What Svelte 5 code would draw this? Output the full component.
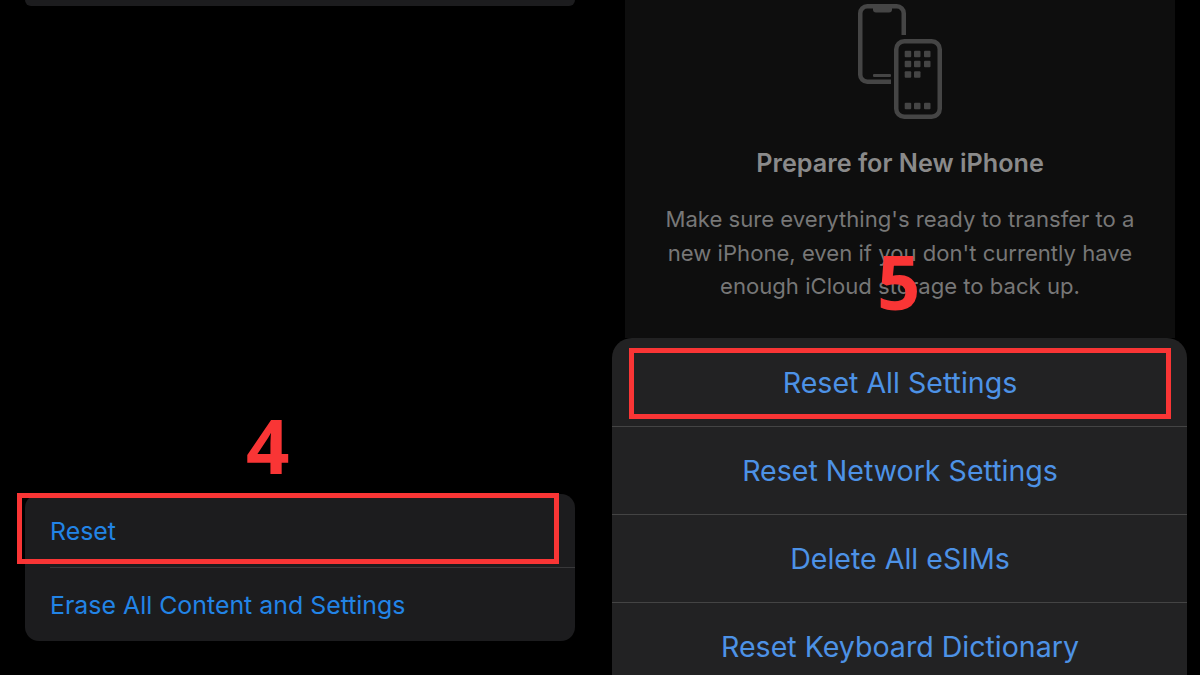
<script>
  const actions = ['Reset All Settings', 'Reset Network Settings', 'Delete All eSIMs', 'Reset Keyboard Dictionary'];
</script>

<div class="page">
  <section class="left">
    <div class="top-card"></div>
    <div class="menu-wrap">
      <span class="step step4">4</span>
      <div class="menu">
        <div class="menu-row first">Reset</div>
        <div class="divider"></div>
        <div class="menu-row">Erase All Content and Settings</div>
      </div>
      <div class="mark mark-left"></div>
    </div>
  </section>

  <section class="right">
    <div class="prepare">
      <svg class="phones" width="84" height="118" viewBox="0 0 84 118" fill="none" aria-hidden="true">
        <path d="M33 79.750H9.250A7 7 0 0 1 2.250 72.750V11.250A7 7 0 0 1 9.250 4.250H38.750A7 7 0 0 1 45.750 11.250V33" stroke="#454545" stroke-width="4.500"/>
        <path d="M15 4h19v3.500a3 3 0 0 1-3 3H18a3 3 0 0 1-3-3z" fill="#454545"/>
        <rect x="15" y="72" width="18" height="3" rx="1" fill="#454545"/>
        <rect x="38.250" y="39.250" width="43.500" height="75.500" rx="8" stroke="#454545" stroke-width="4.500"/>
        <g fill="#454545">
          <rect x="46.700" y="48.700" width="6.500" height="6.500" rx="1"/><rect x="56" y="48.700" width="6.500" height="6.500" rx="1"/><rect x="66" y="48.700" width="6.500" height="6.500" rx="1"/>
          <rect x="46.700" y="58.700" width="6.500" height="6.500" rx="1"/><rect x="56" y="58.700" width="6.500" height="6.500" rx="1"/><rect x="66" y="58.700" width="6.500" height="6.500" rx="1"/>
          <rect x="46.700" y="69.300" width="6.500" height="6.500" rx="1"/><rect x="56" y="69.300" width="6.500" height="6.500" rx="1"/>
          <rect x="46.700" y="100.700" width="6.500" height="6.500" rx="1"/><rect x="56" y="100.700" width="6.500" height="6.500" rx="1"/><rect x="66" y="100.700" width="6.500" height="6.500" rx="1"/>
        </g>
      </svg>
      <h2>Prepare for New iPhone</h2>
      <p>Make sure everything's ready to transfer to a<br />new iPhone, even if you don't currently have<br />enough iCloud storage to back up.</p>
      <span class="step step5">5</span>
    </div>
    <div class="sheet">
      {#each actions as action}
        <div class="sheet-row">{action}</div>
      {/each}
      <div class="mark mark-right"></div>
    </div>
  </section>
</div>

<style>
  :global(body) { margin: 0; background: #000; }
  .page {
    width: 1200px; height: 675px; overflow: hidden; display: flex; background: #000;
    font-family: Inter, "Liberation Sans", sans-serif;
  }
  .left { width: 600px; display: flex; flex-direction: column; justify-content: space-between; padding: 0 25px 34px; box-sizing: border-box; }
  .top-card { height: 6px; background: #1c1c1e; border-radius: 0 0 14px 14px; }
  .menu-wrap { position: relative; }
  .menu { background: #1c1c1e; border-radius: 14px; height: 147px; }
  .menu-row { height: 73px; padding-left: 25px; display: flex; align-items: center; color: #2284e6; font-size: 24.900px; }
  .divider { height: 1px; margin-left: 25px; background: #38383a; }
  .mark { position: absolute; border: 5px solid #f93535; box-sizing: border-box; pointer-events: none; }
  .mark-left { left: -8px; top: -1px; width: 542px; height: 71px; }
  .step { position: absolute; color: #f93535; font-family: "Open Sans", sans-serif; font-weight: 700; font-size: 76px; line-height: 1; }
  .step4 { left: 221px; top: -87px; }
  .right { width: 600px; display: flex; flex-direction: column; align-items: flex-start; padding-left: 12px; box-sizing: border-box; }
  .prepare { position: relative; width: 550px; height: 338px; margin-left: 13px; flex: none; background: #0e0e0e; display: flex; flex-direction: column; align-items: center; color: #777; box-sizing: border-box; }
  .phones { margin-top: 2px; flex: none; }
  h2 { margin: 28px 0 0; font-size: 25.200px; line-height: 30px; font-weight: 600; color: #8a8a8a; }
  p { margin: 25px 0 0; font-size: 22.100px; line-height: 33.500px; text-align: center; white-space: nowrap; }
  .step5 { left: 252px; top: 243px; }
  .sheet { position: relative; width: 575px; flex: none; padding-top: 1px; background: #222223; border-radius: 20px 20px 0 0; }
  .sheet-row { height: 87px; padding-left: 1px; display: flex; align-items: center; justify-content: center; color: #4d92e6; font-size: 28.550px; border-bottom: 1px solid #444; }
  .mark-right { left: 17px; top: 10px; width: 542px; height: 71px; }
</style>
